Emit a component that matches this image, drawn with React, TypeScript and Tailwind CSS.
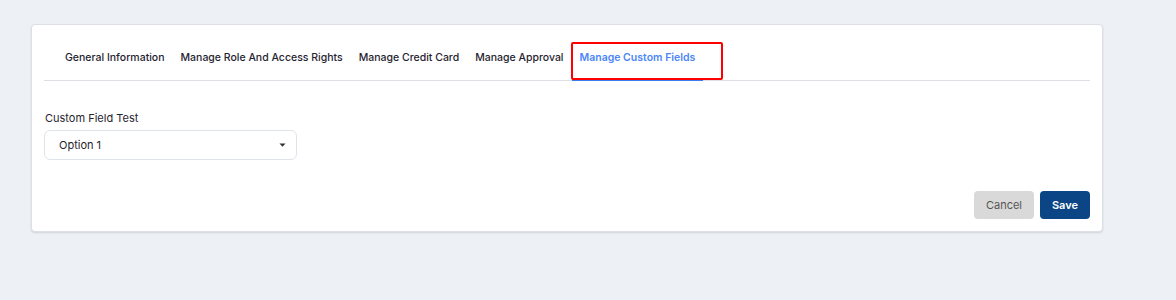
import { useState } from 'react';

const tabs = [
  'General Information',
  'Manage Role And Access Rights',
  'Manage Credit Card',
  'Manage Approval',
  'Manage Custom Fields',
];

function Caret() {
  return (
    <svg width="7" height="4" viewBox="0 0 7 4" className="shrink-0">
      <path d="M0.5 0.5h6L3.5 3.8z" fill="#333" />
    </svg>
  );
}

export default function App() {
  const [active, setActive] = useState(4);

  return (
    <div
      className="min-h-[300px] w-full bg-[#edf1f5] pt-[24px] pl-[31px]"
      style={{ fontFamily: 'Inter, "Noto Sans", sans-serif' }}
    >
      <div className="w-[1072px] rounded-[4px] border border-[#dcdfe3] bg-white shadow-[0_1px_2px_rgba(0,0,0,0.12)] px-3 pt-[16px] pb-[12px]">
        {/* Tabs */}
        <ul className="flex border-b border-[#dcdfe4] pl-[13px]">
          {tabs.map((t, i) => (
            <li key={t} className="relative -mb-px">
              <button
                onClick={() => setActive(i)}
                className={`px-2 pt-[9px] pb-[13px] text-[10.5px] leading-4 border-b-2 ${
                  active === i ? 'text-[#4d86f7] font-semibold border-[#3b7df0]' : 'text-[#1f2430] font-medium border-transparent'
                }`}
              >
                {t}
              </button>
              {i === 4 && (
                <span className="pointer-events-none absolute -left-px top-px h-[38px] w-[152px] border-[2.5px] border-[#f00] rounded-[2px]" />
              )}
            </li>
          ))}
        </ul>

        {/* Form */}
        <div className="pt-[29px]">
          <label className="block pl-px text-[11px] leading-4 text-[#1f2430]">Custom Field Test</label>
          <button className="mt-[4px] flex h-[30px] w-[253px] items-center justify-between rounded-[6px] border border-[#dfe4ea] pl-[14px] pr-[10px] text-[11px] text-[#1f2430]">
            <span>Option 1</span>
            <Caret />
          </button>
        </div>

        {/* Actions */}
        <div className="mt-[31px] flex justify-end gap-[6px]">
          <button className="h-[28px] w-[60px] rounded-[4px] bg-[#d9d9d9] text-[11px] text-[#555]">Cancel</button>
          <button className="h-[28px] w-[50px] rounded-[4px] bg-[#0b4585] text-[11px] font-semibold text-white">Save</button>
        </div>
      </div>
    </div>
  );
}
